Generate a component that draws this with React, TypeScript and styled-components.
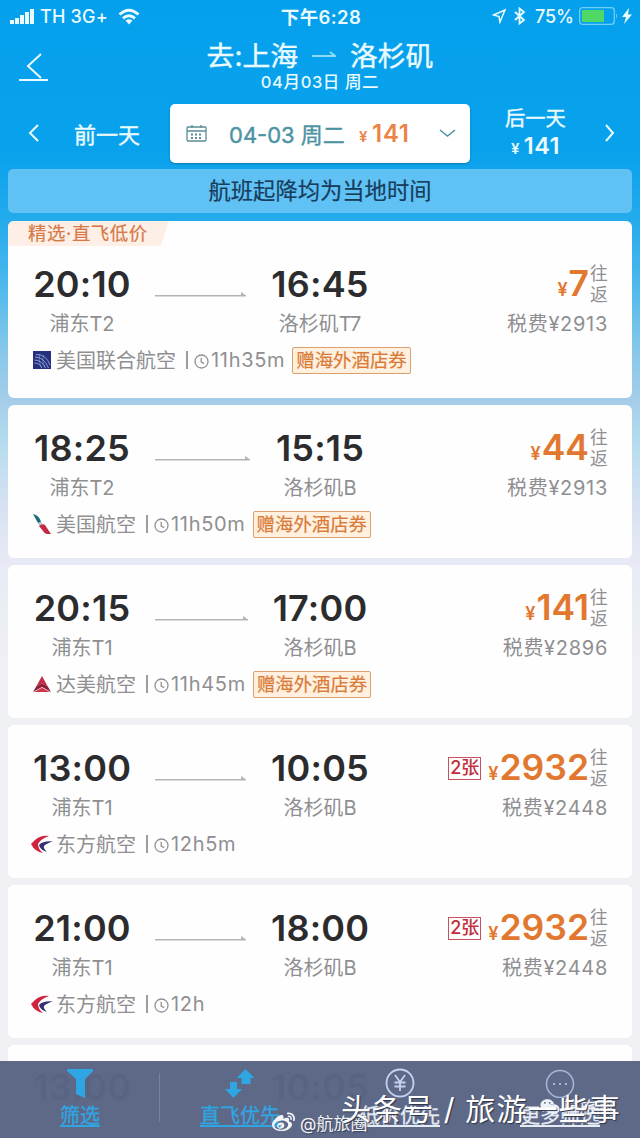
import React from 'react';
import styled, { createGlobalStyle } from 'styled-components';
import { FaWeibo, FaWeixin } from 'react-icons/fa';

const GlobalStyle = createGlobalStyle`
  * { box-sizing: border-box; }
  body { margin: 0; }
`;

const Screen = styled.div`
  position: relative;
  width: 640px;
  height: 1138px;
  overflow: hidden;
  font-family: 'Inter', 'Noto Sans CJK SC', sans-serif;
  white-space: nowrap;
  color: #e9fbff;
  background: linear-gradient(180deg, #05a0ec 0px, #08a1ec 150px, #22aaec 215px, #42b5ec 270px, #86c8ea 350px, #a5cde9 400px, #b4dcee 440px, #d9e2f2 510px, #e9ebf5 570px, #eff1f4 680px, #f0eff4 1138px);
`;

const StatusBar = styled.div`
  height: 32px;
  display: grid;
  grid-template-columns: 1fr auto 1fr;
  align-items: center;
  padding: 0 8px 0 10px;
`;

const StatusGroup = styled.div<{ $end?: boolean }>`
  display: flex;
  align-items: center;
  justify-content: ${p => (p.$end ? 'flex-end' : 'flex-start')};
`;

const StatusText = styled.span<{ $size?: number; $weight?: number; $spacing?: number; $before?: number }>`
  margin-left: ${p => p.$before ?? 0}px;
  font-size: ${p => p.$size ?? 18}px;
  font-weight: ${p => p.$weight ?? 500};
  letter-spacing: ${p => p.$spacing ?? 0}px;
`;

const TitleBar = styled.div`
  height: 66px;
  display: grid;
  grid-template-columns: 60px 1fr 60px;
  padding: 5px 0 0;
`;

const BackSlot = styled.div`
  padding: 15px 0 0 18px;
`;

const TitleStack = styled.div`
  display: flex;
  flex-direction: column;
  align-items: center;
`;

const Route = styled.div`
  display: flex;
  align-items: center;
  height: 34px;
  font-size: 27.8px;
  gap: 14px;
  -webkit-text-stroke: 0.4px currentColor;
`;

const TravelDate = styled.div`
  height: 22px;
  line-height: 22px;
  font-size: 16.5px;
  font-weight: 500;
  letter-spacing: 0.6px;
`;

const DateBar = styled.div`
  height: 71px;
  display: grid;
  grid-template-columns: 170px 300px 170px;
  align-items: center;
`;

const DaySide = styled.div<{ $next?: boolean }>`
  display: flex;
  align-items: center;
  gap: ${p => (p.$next ? 38 : 34)}px;
  padding-left: ${p => (p.$next ? 35 : 27)}px;
  padding-bottom: 2px;
  font-size: ${p => (p.$next ? 20.3 : 22)}px;
  -webkit-text-stroke: 0.4px currentColor;
`;

const DayStack = styled.div`
  display: flex;
  flex-direction: column;
  align-items: center;
  line-height: 26.5px;
`;

const DayPrice = styled.span`
  font-size: 23.5px;
  font-weight: 600;
  letter-spacing: 0.4px;
  -webkit-text-stroke: 0;
`;

const Yen = styled.span<{ $size: number }>`
  font-size: ${p => p.$size}px;
  font-weight: 600;
  line-height: 1;
  margin-right: 4px;
`;

const DatePicker = styled.div`
  height: 59px;
  border-radius: 5px;
  background: #fff;
  display: flex;
  align-items: center;
  padding: 0 14px 0 16px;
  color: #4c93a3;
  font-size: 22px;
  box-shadow: 0 1px 2px #1278a8;
`;

const PickerDate = styled.span`
  margin: 0 0 2px 22px;
  -webkit-text-stroke: 0.4px currentColor;
`;

const PickerPrice = styled.span`
  margin-left: 14px;
  margin-right: auto;
  color: #ec8347;
  font-weight: 600;
  font-size: 24px;
  letter-spacing: 0.7px;
`;

const Notice = styled.div`
  height: 44px;
  margin: 0 8px 8px;
  border-radius: 5px;
  background: #5fc1f4;
  color: #173c5c;
  font-size: 22.3px;
  line-height: 44px;
  text-align: center;
  -webkit-text-stroke: 0.2px currentColor;
`;

const FlightList = styled.div`
  display: flex;
  flex-direction: column;
  gap: 7px;
  padding: 0 8px;
`;

const Card = styled.article<{ $featured?: boolean }>`
  height: ${p => (p.$featured ? 177 : 153)}px;
  padding: ${p => (p.$featured ? 0 : 22)}px 24px 0 25px;
  border-radius: 6px;
  background: #fefefe;
  color: #8f8f92;
  font-size: 20px;
`;

const Ribbon = styled.div`
  width: 161px;
  height: 25px;
  margin: 0 0 17px -25px;
  padding-left: 20px;
  line-height: 25px;
  font-size: 18.4px;
  letter-spacing: 0.6px;
  color: #d67a48;
  background: #fdefe6;
  border-radius: 6px 0 0 0;
  clip-path: polygon(0 0, 100% 0, 98% 40%, 95% 100%, 0 100%);
  -webkit-text-stroke: 0.2px currentColor;
`;

const MainRow = styled.div`
  display: grid;
  grid-template-columns: 98px 140px 98px 1fr;
  height: 40px;
  align-items: center;
`;

const Time = styled.span`
  font-size: 36px;
  line-height: 40px;
  font-weight: 600;
  letter-spacing: 0.2px;
  color: #2c2c2f;
  text-align: center;
`;

const ArrowSlot = styled.div`
  padding: 20px 0 0 24px;
  display: flex;
`;

const PriceBlock = styled.div`
  display: flex;
  align-items: center;
  justify-content: flex-end;
`;

const Price = styled.span`
  font-size: 35.5px;
  line-height: 40px;
  font-weight: 600;
  color: #e2772f;
`;

const PriceYen = styled.span`
  font-size: 18px;
  line-height: 1;
  margin-right: 1px;
`;

const Seats = styled.span`
  height: 23px;
  margin-right: 7px;
  padding: 0 1px;
  border: 1px solid #c9505c;
  font-size: 18px;
  font-weight: 500;
  line-height: 20px;
  color: #bf2f3e;
`;

const RoundTrip = styled.span`
  width: 18px;
  margin-left: 1px;
  font-size: 17.8px;
  line-height: 21px;
  white-space: normal;
  word-break: break-all;
`;

const CodeRow = styled.div`
  display: grid;
  grid-template-columns: 98px 118px 142px 1fr;
  height: 26px;
  margin-top: 5px;
  align-items: center;
  text-align: center;
`;

const Code = styled.span<{ $column: number }>`
  grid-column: ${p => p.$column};
`;

const Tax = styled.span`
  grid-column: 4;
  text-align: right;
  letter-spacing: 0.7px;
`;

const CarrierRow = styled.div`
  display: flex;
  align-items: center;
  height: 28px;
  margin-top: 12px;
`;

const Carrier = styled.span`
  margin: -1px 0 0 5px;
`;

const Separator = styled.i`
  width: 2px;
  height: 18px;
  margin: 0 6px 0 10px;
  background: #9c9c9f;
`;

const Duration = styled.span`
  margin-left: 2px;
  letter-spacing: 0.7px;
`;

const Gift = styled.span`
  height: 27px;
  margin-left: 7px;
  padding: 0 3px;
  border: 1px solid #dba06f;
  border-radius: 2px;
  background: #fff0e0;
  color: #d97a36;
  font-size: 18.4px;
  line-height: 25px;
  -webkit-text-stroke: 0.2px currentColor;
`;

const Footer = styled.nav`
  position: absolute;
  left: 0;
  right: 0;
  bottom: 0;
  height: 77px;
  display: grid;
  grid-template-columns: repeat(4, 1fr);
  background: rgba(89, 101, 132, 0.975);
`;

const Tab = styled.div<{ $active?: boolean; $divider?: boolean }>`
  display: flex;
  flex-direction: column;
  align-items: center;
  padding-top: 7px;
  color: ${p => (p.$active ? '#2fa6e3' : '#e6ecf6')};
  font-size: 20px;
  background: ${p => (p.$divider ? 'linear-gradient(#7683a0, #7683a0) right 12px / 1px 49px no-repeat' : 'none')};
`;

const TabLabel = styled.span`
  margin-top: 3px;
  line-height: 30px;
  text-decoration: underline;
  text-decoration-thickness: 2px;
  text-underline-offset: 2px;
  -webkit-text-stroke: 0.3px currentColor;
`;

const WeiboMark = styled.div`
  position: absolute;
  left: 272px;
  top: 1109px;
  display: flex;
  align-items: center;
  gap: 5px;
  height: 26px;
  font-size: 17px;
  color: #f2f4f8;
  text-shadow: 1px 1px 1px #3a4257;
`;

const WeixinMark = styled.div`
  position: absolute;
  left: 540px;
  top: 1094px;
  display: flex;
  align-items: center;
  gap: 2px;
  font-size: 17px;
  color: #eef2f8;
`;

const AuthorMark = styled.div`
  position: absolute;
  left: 341px;
  top: 1087px;
  font-size: 30px;
  line-height: 44px;
  letter-spacing: 1.1px;
  color: #fff;
  text-shadow: 1px 1px 1px #2d3449;
`;

const Chevron = ({ d, w, h, width = 2 }: { d: string; w: number; h: number; width?: number }) => (
  <svg width={w} height={h} fill="none" stroke="currentColor" strokeWidth={width}><path d={d} /></svg>
);

const LoweredSvg = styled.svg`
  margin-top: 3px;
`;

const SpacedIcon = styled.svg<{ $before?: number; $after?: number }>`
  margin: 0 ${p => p.$after ?? 0}px 0 ${p => p.$before ?? 0}px;
`;

const ClockIcon = () => (
  <LoweredSvg width="15" height="15" viewBox="0 0 15 15" fill="none" stroke="#929295" strokeWidth="1.3">
    <circle cx="7.5" cy="7.5" r="6.5" /><path d="M7.2 3.8v4.4l3 1.4" />
  </LoweredSvg>
);

type Airline = 'united' | 'american' | 'delta' | 'eastern';

const AirlineLogo = ({ name }: { name: Airline }) => {
  if (name === 'united') return (
    <svg width="18" height="18" viewBox="0 0 18 18">
      <path fill="#25307f" d="M0 0h18v18H0z" />
      <g fill="none" stroke="#9aa9dc" strokeWidth=".9">
        <path d="M3 3.500Q13 3 17 14M2 6q9 0 13.500 11M1.500 9q7 0 11 8M1.500 12q5 0 7.500 5" />
        <path strokeWidth=".5" d="M7 3Q5 8 8 16M11 4Q8 9 12 16" />
      </g>
    </svg>
  );
  if (name === 'american') return (
    <svg width="18" height="20" viewBox="0 0 18 20">
      <path fill="#176a77" d="M0 0q6 1 8 8l-3 1z" />
      <path fill="#b9c2c9" d="M5 9l3-1 2 3-3 2z" />
      <path fill="#c12c42" d="M6 12q4-3 6-1l6 9q-6 1-8-3z" />
    </svg>
  );
  if (name === 'delta') return (
    <svg width="18" height="16" viewBox="0 0 18 16">
      <path fill="#c22d45" d="M9 0l5.500 10L9 7.500 3.500 10z" />
      <path fill="#8d1f38" d="M3.500 10L9 7.500l5.500 2.500L18 16l-9-5-9 5z" />
      <path fill="#cf3550" d="M1 16l8-4.300L17 16z" />
    </svg>
  );
  return (
    <SpacedIcon width="22" height="19" viewBox="0 0 22 19" $before={-2} $after={-2}>
      <path fill="#cf2440" d="M18 1Q8-1 0 9l6 1.500Q9 4 18 1z" />
      <path fill="#cf2440" d="M0 9q4 8 12 9-5-4-5-9z" />
      <path fill="#34316e" d="M22 6.500Q12 5.500 8 10q1 5 8 7-4-4-3-6 3-3 9-4.500z" />
    </SpacedIcon>
  );
};

interface Flight {
  dep: string; arr: string; from: string; to: string;
  price: string; tax: string; seats?: string;
  airline: Airline; carrier: string; duration: string;
  gift?: boolean; ribbon?: string; arrow: number;
}

const flights: Flight[] = [
  { dep: '20:10', arr: '16:45', from: '浦东T2', to: '洛杉矶T7', price: '7', tax: '2913', airline: 'united', carrier: '美国联合航空', duration: '11h35m', gift: true, ribbon: '精选·直飞低价', arrow: 91 },
  { dep: '18:25', arr: '15:15', from: '浦东T2', to: '洛杉矶B', price: '44', tax: '2913', airline: 'american', carrier: '美国航空', duration: '11h50m', gift: true, arrow: 95 },
  { dep: '20:15', arr: '17:00', from: '浦东T1', to: '洛杉矶B', price: '141', tax: '2896', airline: 'delta', carrier: '达美航空', duration: '11h45m', gift: true, arrow: 93 },
  { dep: '13:00', arr: '10:05', from: '浦东T1', to: '洛杉矶B', price: '2932', tax: '2448', seats: '2张', airline: 'eastern', carrier: '东方航空', duration: '12h5m', arrow: 91 },
  { dep: '21:00', arr: '18:00', from: '浦东T1', to: '洛杉矶B', price: '2932', tax: '2448', seats: '2张', airline: 'eastern', carrier: '东方航空', duration: '12h', arrow: 91 },
];

const FlightCard = ({ f }: { f: Flight }) => (
  <Card $featured={!!f.ribbon}>
    {f.ribbon && <Ribbon>{f.ribbon}</Ribbon>}
    <MainRow>
      <Time>{f.dep}</Time>
      <ArrowSlot>
        <svg width={f.arrow} height="6" fill="#b3b3b5">
          <path d={`M0 4H${f.arrow - 5}V1l5 3.600V5.500H0z`} />
        </svg>
      </ArrowSlot>
      <Time>{f.arr}</Time>
      <PriceBlock>
        {f.seats && <Seats>{f.seats}</Seats>}
        <Price><PriceYen>¥</PriceYen>{f.price}</Price>
        <RoundTrip>往返</RoundTrip>
      </PriceBlock>
    </MainRow>
    <CodeRow>
      <Code $column={1}>{f.from}</Code>
      <Code $column={3}>{f.to}</Code>
      <Tax>税费¥{f.tax}</Tax>
    </CodeRow>
    <CarrierRow>
      <AirlineLogo name={f.airline} />
      <Carrier>{f.carrier}</Carrier>
      <Separator />
      <ClockIcon />
      <Duration>{f.duration}</Duration>
      {f.gift && <Gift>赠海外酒店券</Gift>}
    </CarrierRow>
  </Card>
);

export default function App() {
  return (
    <Screen>
      <GlobalStyle />
      <StatusBar>
        <StatusGroup>
          <svg width="25" height="17" fill="currentColor">
            <path d="M0 12h4v4H0zM5 10h4v6H5zM10 7h4v9h-4zM15 4h4v12h-4zM20 1h4v15h-4z" />
          </svg>
          <StatusText $before={5} $spacing={0.2}>TH 3G+</StatusText>
          <SpacedIcon width="22" height="17" viewBox="0 0 22 17" fill="none" stroke="currentColor" strokeWidth="3" $before={10}>
            <path d="M1.500 6.500Q11-2 20.500 6.500M5 10.300q6-5 12 0" /><path fill="currentColor" stroke="none" d="M7.500 12.500q3.500-2.500 7 0L11 16.500z" />
          </SpacedIcon>
        </StatusGroup>
        <StatusText $size={18.5} $weight={600} $spacing={0.4}>下午6:28</StatusText>
        <StatusGroup $end>
          <svg width="15" height="16" viewBox="0 0 15 16" fill="none" stroke="currentColor" strokeWidth="1.500"><path d="M13 2L1.500 7l5.500 1.500L8 14z" /></svg>
          <SpacedIcon width="12" height="18" viewBox="0 0 12 18" fill="none" stroke="currentColor" strokeWidth="1.800" $before={7} $after={9}><path d="M1 5l9 8-4.500 3.500v-15L10 5l-9 8" /></SpacedIcon>
          <StatusText>75%</StatusText>
          <SpacedIcon width="40" height="18" viewBox="0 0 40 18" $before={5}>
            <rect x=".7" y=".7" width="34.600" height="16.600" rx="3" fill="none" stroke="#74cdf4" strokeWidth="1.300" />
            <rect x="3" y="3" width="22" height="12" rx="1" fill="#4fd964" /><path d="M37 6q2 3 0 6z" fill="#74cdf4" />
          </SpacedIcon>
          <SpacedIcon width="10" height="16" viewBox="0 0 10 16" fill="currentColor" $before={3}><path d="M7 0L0 9h4l-2 7 8-9.500H6z" /></SpacedIcon>
        </StatusGroup>
      </StatusBar>

      <TitleBar>
        <BackSlot>
          <Chevron w={32} h={32} d="M23 2L10 14l13 12M1 28h29" width={2} />
        </BackSlot>
        <TitleStack>
          <Route>
            <span>去:上海</span>
            <svg width="24" height="8" fill="none" stroke="#8edcf5" strokeWidth="2"><path d="M0 6h23l-5-4" /></svg>
            <span>洛杉矶</span>
          </Route>
          <TravelDate>04月03日 周二</TravelDate>
        </TitleStack>
      </TitleBar>

      <DateBar>
        <DaySide>
          <Chevron w={13} h={18} d="M11 1L3 9l8 8" />
          <span>前一天</span>
        </DaySide>
        <DatePicker>
          <svg width="21" height="17" viewBox="0 0 21 17" fill="none" stroke="#5b8c98" strokeWidth="1.300">
            <rect x="1" y="2" width="19" height="14" rx="1" /><path d="M1 6h19M6 0v3M15 0v3" />
            <path strokeWidth="2" strokeDasharray="2 2" d="M5 9.500h12M5 13h12" />
          </svg>
          <PickerDate>04-03 周二</PickerDate>
          <PickerPrice><Yen $size={15}>¥</Yen>141</PickerPrice>
          <Chevron w={17} h={9} d="M1 1l7.500 6L16 1" width={1.5} />
        </DatePicker>
        <DaySide $next>
          <DayStack>
            <span>后一天</span>
            <DayPrice><Yen $size={15}>¥</Yen>141</DayPrice>
          </DayStack>
          <Chevron w={12} h={18} d="M2 1l7 8-7 8" />
        </DaySide>
      </DateBar>

      <Notice>航班起降均为当地时间</Notice>

      <FlightList>
        {flights.map(f => <FlightCard key={f.dep} f={f} />)}
        <Card>
          <MainRow>
            <Time>13:00</Time>
            <span />
            <Time>10:05</Time>
          </MainRow>
        </Card>
      </FlightList>

      <Footer>
        <Tab $active $divider>
          <svg width="28" height="30" viewBox="0 0 28 30" fill="currentColor"><path d="M1 1h26v2l-8 8v19l-9-4V11L1 3z" /></svg>
          <TabLabel>筛选</TabLabel>
        </Tab>
        <Tab $active>
          <svg width="30" height="30" viewBox="0 0 30 30" fill="currentColor">
            <path d="M20.500 1l9 9h-4v6h-9v-6h-5zM5 14h7v7h5l-8.500 9L0 21h5z" />
          </svg>
          <TabLabel>直飞优先</TabLabel>
        </Tab>
        <Tab>
          <svg width="30" height="30" viewBox="0 0 30 30" fill="none" stroke="#c3d2f0" strokeWidth="1.800">
            <circle cx="15" cy="15" r="13.500" /><path d="M10 7l5 7 5-7M15 14v9M9.500 14.500h11M9.500 18.500h11" />
          </svg>
          <TabLabel>低价优先</TabLabel>
        </Tab>
        <Tab>
          <svg width="30" height="30" viewBox="0 0 30 30" fill="none" stroke="#a9b8d8" strokeWidth="1.500">
            <circle cx="15" cy="16" r="13.500" /><path strokeWidth="2" d="M8 16h2M14 16h2M20 16h2" />
          </svg>
          <TabLabel>更多筛选</TabLabel>
        </Tab>
      </Footer>

      <WeiboMark><FaWeibo size={23} /><span>@航旅圈</span></WeiboMark>
      <WeixinMark><FaWeixin size={20} /><span>航旅圈</span></WeixinMark>
      <AuthorMark>头条号 / 旅游一些事</AuthorMark>
    </Screen>
  );
}
